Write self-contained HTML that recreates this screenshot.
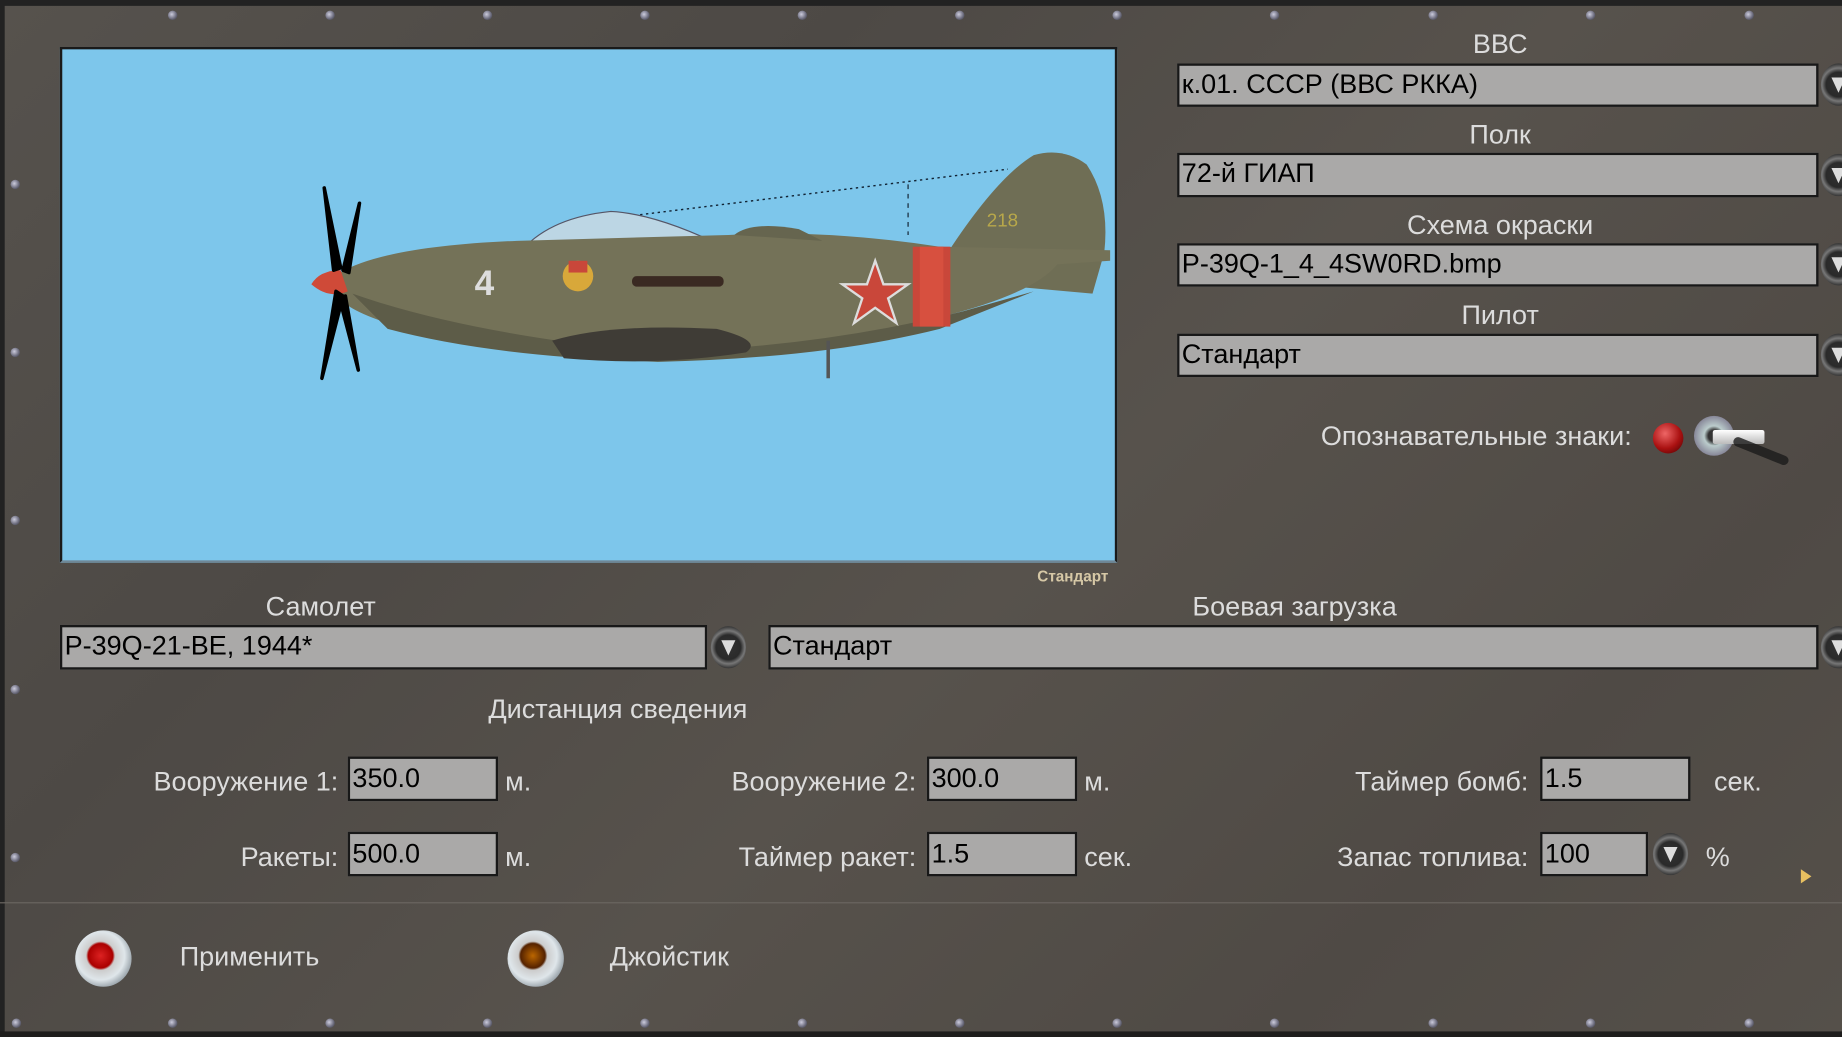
<!DOCTYPE html>
<html><head><meta charset="utf-8">
<style>
html,body{margin:0;padding:0;width:1842px;height:1037px;overflow:hidden;background:#1c1a18;}
#s{position:absolute;left:0;top:0;width:1568px;height:883px;transform:scale(1.174745);transform-origin:0 0;
 background:linear-gradient(135deg,#56524d 0%,#4d4945 30%,#57524c 55%,#4f4a45 80%,#55504a 100%);
 font-family:"Liberation Sans Narrow","Liberation Sans",sans-serif;overflow:hidden;}
.frameT{position:absolute;left:0;top:0;width:1568px;height:5px;background:#222;}
.frameL{position:absolute;left:0;top:0;width:4px;height:883px;background:#222;}
.frameB{position:absolute;left:0;top:878px;width:1568px;height:5px;background:#1e1d1c;}
.lbl{position:absolute;color:#dcdcdc;font-size:23px;white-space:nowrap;line-height:26px;}
.c{transform:translateX(-50%);}
.r{transform:translateX(-100%);}
.f{position:absolute;background:#aaa9a8;border:2px solid #181818;box-sizing:border-box;color:#000;font-size:23px;line-height:30px;padding-left:2px;white-space:nowrap;overflow:hidden;}
.btn{position:absolute;width:30px;height:36px;border-radius:50%;background:radial-gradient(circle at 50% 50%,#333 0,#2a2a2a 45%,#777 60%,#3a3a3a 75%);}
.btn:after{content:"";position:absolute;left:9px;top:12px;border-left:6px solid transparent;border-right:6px solid transparent;border-top:13px solid #ddd;}
.screw{position:absolute;width:8px;height:8px;border-radius:50%;background:radial-gradient(circle at 40% 40%,#ccd,#667 60%,#333);}
</style></head><body>
<div id="s">
<div class="frameT"></div><div class="frameL"></div><div class="frameB"></div>
<div style="position:absolute;left:0;top:768px;width:1568px;height:1px;background:#6b6661"></div>

<!-- screws -->
<div class="screw" style="left:143px;top:9px"></div><div class="screw" style="left:277px;top:9px"></div>
<div class="screw" style="left:411px;top:9px"></div><div class="screw" style="left:545px;top:9px"></div>
<div class="screw" style="left:679px;top:9px"></div><div class="screw" style="left:813px;top:9px"></div>
<div class="screw" style="left:947px;top:9px"></div><div class="screw" style="left:1081px;top:9px"></div>
<div class="screw" style="left:1216px;top:9px"></div><div class="screw" style="left:1350px;top:9px"></div>
<div class="screw" style="left:1485px;top:9px"></div>
<div class="screw" style="left:9px;top:153px"></div><div class="screw" style="left:9px;top:296px"></div>
<div class="screw" style="left:9px;top:439px"></div><div class="screw" style="left:9px;top:583px"></div>
<div class="screw" style="left:9px;top:726px"></div>
<div class="screw" style="left:10px;top:867px"></div><div class="screw" style="left:143px;top:867px"></div>
<div class="screw" style="left:277px;top:867px"></div><div class="screw" style="left:411px;top:867px"></div>
<div class="screw" style="left:545px;top:867px"></div><div class="screw" style="left:679px;top:867px"></div>
<div class="screw" style="left:813px;top:867px"></div><div class="screw" style="left:947px;top:867px"></div>
<div class="screw" style="left:1081px;top:867px"></div><div class="screw" style="left:1216px;top:867px"></div>
<div class="screw" style="left:1350px;top:867px"></div><div class="screw" style="left:1485px;top:867px"></div>

<!-- plane view -->
<div style="position:absolute;left:51px;top:40px;width:900px;height:439px;background:#7dc6eb;border:2px solid #1a1a1a;border-bottom-color:#6f8796;box-sizing:border-box;">
<svg width="896" height="435" viewBox="53 42 896 435" style="position:absolute;left:0;top:0">
 <line x1="535" y1="184" x2="858" y2="144" stroke="#123" stroke-width="1.2" stroke-dasharray="2,3"/>
 <line x1="773" y1="157" x2="773" y2="200" stroke="#123" stroke-width="1" stroke-dasharray="4,4"/>
 <path d="M445 212 Q470 185 520 180 Q560 182 620 212 Z" fill="#bcd6e4" stroke="#556" stroke-width="1"/>
 <path d="M810 210 Q850 150 880 132 Q905 125 925 140 Q945 170 940 215 L930 250 L820 240 Z" fill="#6f6e55"/>
 <path d="M285 235 Q320 210 440 205 L620 200 Q700 195 800 210 L945 213 L945 222 L900 225 Q880 250 800 270 Q700 300 560 305 Q420 300 330 275 Q290 262 285 248 Z" fill="#747258"/>
 <path d="M300 250 Q400 285 560 300 Q700 295 820 265 L880 248 L800 280 Q700 305 560 308 Q420 304 330 280 Z" fill="#5d5c48"/>
 <path d="M470 290 Q520 275 610 280 Q650 290 635 300 Q560 312 480 305 Z" fill="#3f3c36"/>
 <path d="M625 200 Q640 188 680 195 L700 205 Z" fill="#66654f"/>
 <rect x="777" y="210" width="32" height="68" fill="#c9473a"/>
 <rect x="783" y="210" width="20" height="68" fill="#d7503f"/>
 <polygon points="745,222 752,242 773,242 756,254 763,275 745,262 727,275 734,254 717,242 738,242" fill="#c9473a" stroke="#ddd" stroke-width="2"/>
 <text x="404" y="251" font-family="Liberation Sans" font-size="30" font-weight="bold" fill="#ddd">4</text>
 <text x="840" y="193" font-family="Liberation Sans" font-size="16" fill="#b8a84a">218</text>
 <circle cx="492" cy="235" r="13" fill="#d8a83a"/><rect x="484" y="222" width="16" height="10" fill="#c9473a"/>
 <rect x="538" y="235" width="78" height="9" rx="4" fill="#3a2a22"/>
 <path d="M265 242 Q272 230 290 230 L296 248 Q280 255 265 242 Z" fill="#cf4a38"/>
 <path d="M276 160 L284 230 L290 228 Z M306 173 L292 230 L297 232 Z M274 322 L286 248 L292 252 Z M305 315 L294 252 L289 254 Z" fill="#000" stroke="#000" stroke-width="3" stroke-linejoin="round"/>
 <line x1="705" y1="290" x2="705" y2="322" stroke="#555" stroke-width="3"/>
</svg>
</div>
<div style="position:absolute;left:883px;top:483px;color:#d6c8a6;font-family:'Liberation Sans Narrow','Liberation Sans',sans-serif;font-size:13px;font-weight:bold;">Стандарт</div>

<!-- right column -->
<div class="lbl c" style="left:1277px;top:24px">ВВС</div>
<div class="f" style="left:1002px;top:54px;width:546px;height:37px">к.01. СССР (ВВС РККА)</div>
<div class="btn" style="left:1550px;top:54px"></div>
<div class="lbl c" style="left:1277px;top:101px">Полк</div>
<div class="f" style="left:1002px;top:130px;width:546px;height:38px">72-й ГИАП</div>
<div class="btn" style="left:1550px;top:131px"></div>
<div class="lbl c" style="left:1277px;top:178px">Схема окраски</div>
<div class="f" style="left:1002px;top:207px;width:546px;height:37px">P-39Q-1_4_4SW0RD.bmp</div>
<div class="btn" style="left:1550px;top:207px"></div>
<div class="lbl c" style="left:1277px;top:255px">Пилот</div>
<div class="f" style="left:1002px;top:284px;width:546px;height:37px">Стандарт</div>
<div class="btn" style="left:1550px;top:284px"></div>

<div class="lbl r" style="left:1389px;top:358px">Опознавательные знаки:</div>
<div style="position:absolute;left:1407px;top:360px;width:26px;height:26px;border-radius:50%;background:radial-gradient(circle at 40% 35%,#e66,#a11 55%,#400)"></div>
<div style="position:absolute;left:1442px;top:354px;width:34px;height:34px;border-radius:50%;background:radial-gradient(circle,#333 0,#333 20%,#bcc 35%,#889 70%,#556)"></div>
<div style="position:absolute;left:1458px;top:366px;width:44px;height:12px;background:linear-gradient(#fff,#bbb);border-radius:2px"></div>
<div style="position:absolute;left:1474px;top:380px;width:50px;height:8px;background:#1a1a1a;transform:rotate(22deg);border-radius:4px;opacity:.8"></div>

<!-- middle -->
<div class="lbl c" style="left:273px;top:503px">Самолет</div>
<div class="f" style="left:51px;top:532px;width:551px;height:38px">P-39Q-21-BE, 1944*</div>
<div class="btn" style="left:605px;top:533px"></div>
<div class="lbl c" style="left:1102px;top:503px">Боевая загрузка</div>
<div class="f" style="left:654px;top:532px;width:894px;height:38px">Стандарт</div>
<div class="btn" style="left:1550px;top:533px"></div>

<div class="lbl c" style="left:526px;top:590px">Дистанция сведения</div>

<div class="lbl r" style="left:288px;top:652px">Вооружение 1:</div>
<div class="f" style="left:296px;top:644px;width:128px;height:38px;line-height:32px">350.0</div>
<div class="lbl" style="left:430px;top:652px">м.</div>
<div class="lbl r" style="left:780px;top:652px">Вооружение 2:</div>
<div class="f" style="left:789px;top:644px;width:128px;height:38px;line-height:32px">300.0</div>
<div class="lbl" style="left:923px;top:652px">м.</div>
<div class="lbl r" style="left:1301px;top:652px">Таймер бомб:</div>
<div class="f" style="left:1311px;top:644px;width:128px;height:38px;line-height:32px">1.5</div>
<div class="lbl" style="left:1459px;top:652px">сек.</div>

<div class="lbl r" style="left:288px;top:716px">Ракеты:</div>
<div class="f" style="left:296px;top:708px;width:128px;height:38px;line-height:32px">500.0</div>
<div class="lbl" style="left:430px;top:716px">м.</div>
<div class="lbl r" style="left:780px;top:716px">Таймер ракет:</div>
<div class="f" style="left:789px;top:708px;width:128px;height:38px;line-height:32px">1.5</div>
<div class="lbl" style="left:923px;top:716px">сек.</div>
<div class="lbl r" style="left:1301px;top:716px">Запас топлива:</div>
<div class="f" style="left:1311px;top:708px;width:92px;height:38px;line-height:32px">100</div>
<div class="btn" style="left:1407px;top:709px"></div>
<div class="lbl" style="left:1452px;top:716px">%</div>
<div style="position:absolute;left:1533px;top:740px;border-top:6px solid transparent;border-bottom:6px solid transparent;border-left:9px solid #e8c060"></div>

<!-- bottom buttons -->
<div style="position:absolute;left:64px;top:792px;width:48px;height:48px;border-radius:50%;background:radial-gradient(circle at 45% 45%,#d22 0,#a00 28%,#ccc 33%,#dfe6ea 55%,#7f8a92 80%,#333 100%)"></div>
<div class="lbl" style="left:153px;top:801px">Применить</div>
<div style="position:absolute;left:432px;top:792px;width:48px;height:48px;border-radius:50%;background:radial-gradient(circle at 45% 45%,#b60 0,#520 28%,#ccc 33%,#dfe6ea 55%,#7f8a92 80%,#333 100%)"></div>
<div class="lbl" style="left:519px;top:801px">Джойстик</div>
</div>
</body></html>
